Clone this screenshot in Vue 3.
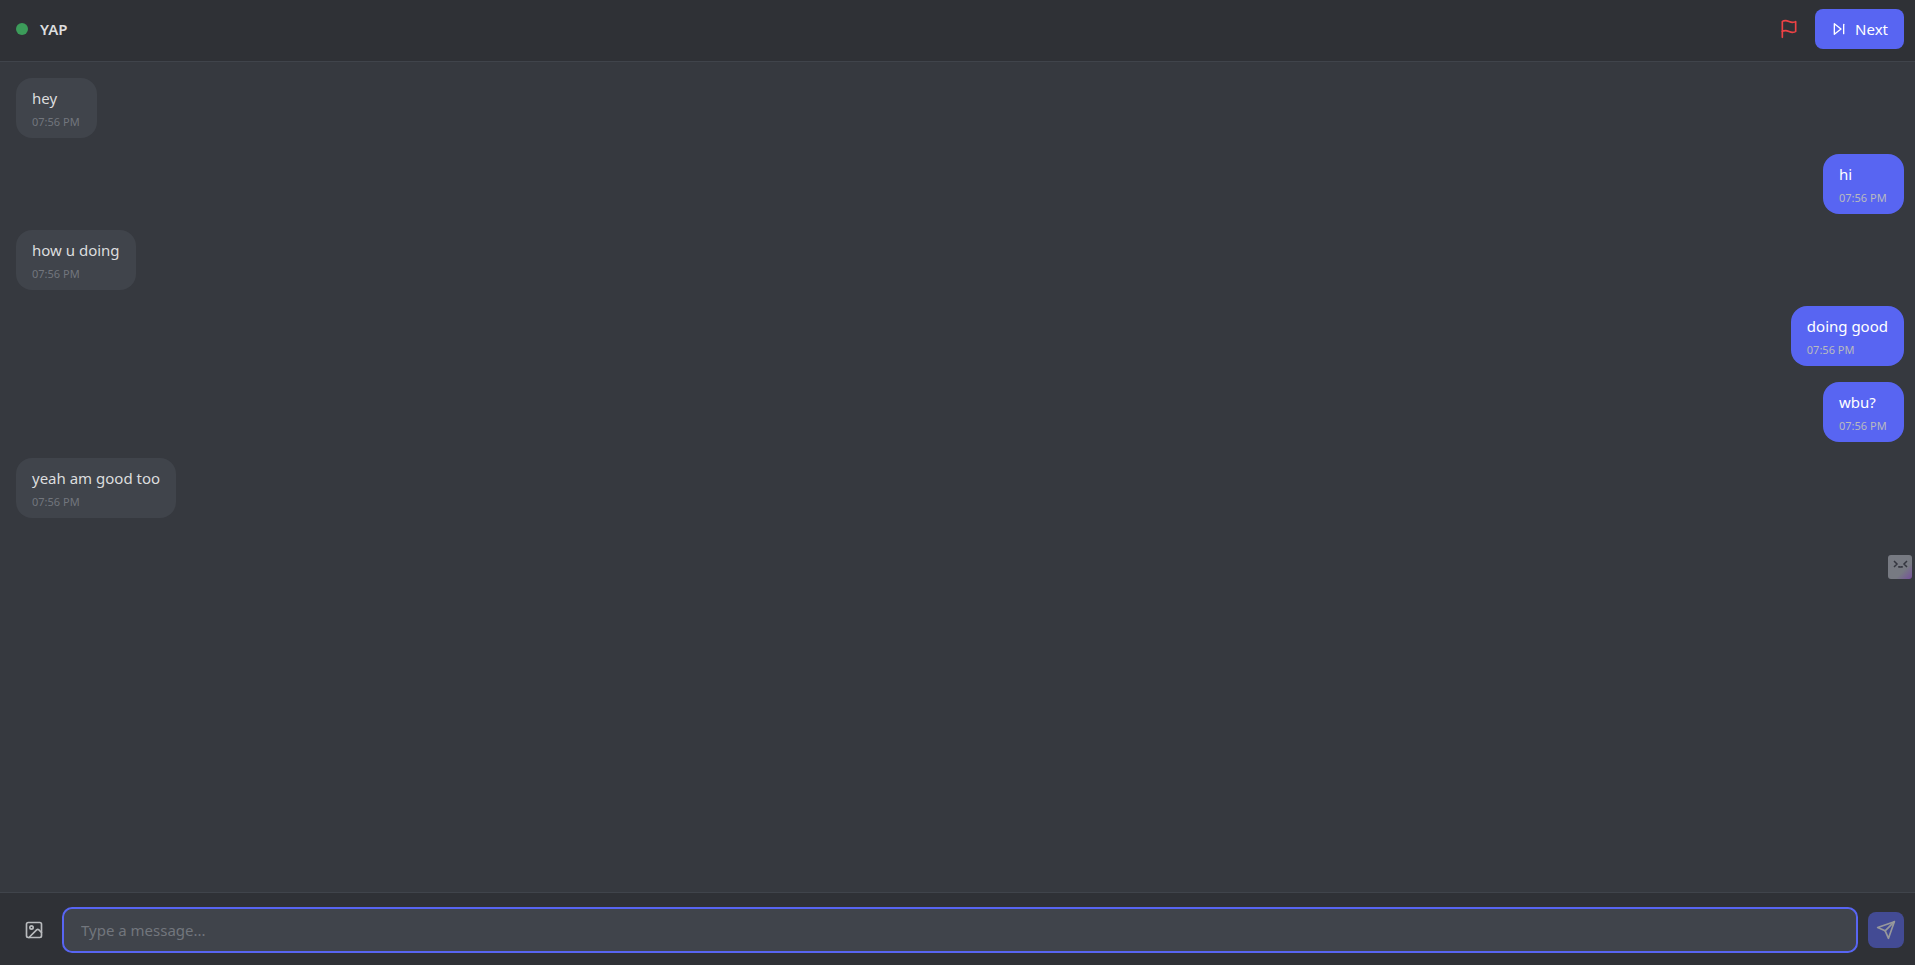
<script setup>
import { ref, onMounted } from 'vue'

const messages = [
  { id: 1, text: 'hey', time: '07:56 PM', own: false },
  { id: 2, text: 'hi', time: '07:56 PM', own: true },
  { id: 3, text: 'how u doing', time: '07:56 PM', own: false },
  { id: 4, text: 'doing good', time: '07:56 PM', own: true },
  { id: 5, text: 'wbu?', time: '07:56 PM', own: true },
  { id: 6, text: 'yeah am good too', time: '07:56 PM', own: false },
]
const draft = ref('')
const field = ref(null)
onMounted(() => field.value.focus())
</script>

<template>
  <div class="chat">
    <header class="topbar">
      <div class="brand">
        <span class="status"></span>
        <h1 class="title">YAP</h1>
      </div>
      <div class="actions">
        <button class="icon-btn report" type="button" aria-label="Report">
          <svg class="icon" viewBox="0 0 24 24"><path d="M4 15s1-1 4-1 5 2 8 2 4-1 4-1V3s-1 1-4 1-5-2-8-2-4 1-4 1z" /><path d="M4 22v-7" /></svg>
        </button>
        <button class="next" type="button">
          <svg class="icon small" viewBox="0 0 24 24"><path d="M5 4l10 8-10 8z" /><path d="M19 5v14" /></svg>
          <span>Next</span>
        </button>
      </div>
    </header>

    <main class="messages">
      <article v-for="m in messages" :key="m.id" class="bubble" :class="{ own: m.own }">
        <p class="text">{{ m.text }}</p>
        <time class="time">{{ m.time }}</time>
      </article>
    </main>

    <form class="composer" @submit.prevent>
      <button class="icon-btn" type="button" aria-label="Add image">
        <svg class="icon" viewBox="0 0 24 24"><rect x="3" y="3" width="18" height="18" rx="2" /><circle cx="9" cy="9" r="2" /><path d="M21 15l-3.1-3.1a2 2 0 0 0-2.8 0L6 21" /></svg>
      </button>
      <input ref="field" v-model="draft" class="field" type="text" placeholder="Type a message..." aria-label="Message" />
      <button class="icon-btn send" type="submit" aria-label="Send" :disabled="!draft">
        <svg class="icon" viewBox="0 0 24 24"><path d="M22 2L15 22l-4-9-9-4z" /><path d="M22 2L11 13" /></svg>
      </button>
    </form>

    <button class="helper" type="button" aria-label="Assistant">
      <svg class="face" viewBox="0 0 24 24"><path d="M6 6l3 3-3 3M19 6l-3 3 3 3M11 11v1h3v-1" /></svg>
    </button>
  </div>
</template>

<style>
body {
  background: #36393f;
}
</style>

<style scoped>
.chat {
  display: flex;
  flex-direction: column;
  min-height: 100vh;
  background: #36393f;
  color: #dcddde;
  font-family: "Segoe UI", "Noto Sans", "Open Sans", sans-serif;
  font-size: 15px;
  line-height: 24px;
}
.topbar {
  display: flex;
  align-items: center;
  justify-content: space-between;
  padding: 9px 11px 12px 16px;
  background: #2f3136;
  border-bottom: 1px solid #40444b;
}
.brand {
  display: flex;
  align-items: center;
  gap: 12px;
}
.status {
  width: 12px;
  height: 12px;
  border-radius: 50%;
  background: #3c9c5a;
}
.title {
  margin: 0;
  font-size: 15px;
  font-weight: 600;
}
.actions {
  display: flex;
  align-items: center;
  gap: 8px;
}
button {
  border: 0;
  font: inherit;
  cursor: pointer;
}
.icon-btn {
  display: flex;
  padding: 8px;
  border-radius: 8px;
  background: transparent;
  color: #b9bbbe;
}
.report {
  color: #ed4245;
}
.icon {
  width: 20px;
  height: 20px;
  fill: none;
  stroke: currentColor;
  stroke-width: 2;
  stroke-linecap: round;
  stroke-linejoin: round;
}
.small {
  width: 16px;
  height: 16px;
}
.next {
  display: flex;
  align-items: center;
  gap: 8px;
  padding: 8px 16px;
  border-radius: 8px;
  background: #5865f2;
  color: #fff;
}
.messages {
  display: flex;
  flex: 1;
  flex-direction: column;
  align-items: flex-start;
  gap: 16px;
  padding: 16px 11px 16px 16px;
}
.bubble {
  box-sizing: border-box;
  min-width: 81px;
  padding: 8px 16px;
  border-radius: 16px;
  background: #40444b;
}
.own {
  align-self: flex-end;
  background: #5865f2;
  color: #fff;
}
.text {
  margin: 0 0 4px;
}
.time {
  display: block;
  font-size: 11px;
  line-height: 16px;
  color: #72767d;
}
.own .time {
  color: #b9bbbe;
}
.composer {
  display: flex;
  align-items: center;
  gap: 12px;
  padding: 16px 11px 14px 16px;
  background: #2f3136;
  border-top: 1px solid #40444b;
}
.field {
  flex: 1;
  min-width: 0;
  padding: 8px 16px;
  border: 1px solid #40444b;
  border-radius: 8px;
  outline: 0;
  background: #40444b;
  color: #dcddde;
  font: inherit;
}
.field:focus {
  box-shadow: 0 0 0 2px #5865f2;
}
.field::placeholder {
  color: #72767d;
  opacity: 1;
}
.send {
  background: #5865f2;
  color: #fff;
}
.send:disabled {
  opacity: 0.5;
}
.helper {
  position: fixed;
  top: 555px;
  right: 3px;
  padding: 0;
  width: 24px;
  height: 24px;
  border-radius: 3px;
  background: linear-gradient(135deg, #777a82 65%, #75509c);
}
.face {
  display: block;
  width: 24px;
  height: 24px;
  fill: none;
  stroke: #34363f;
  stroke-width: 1.5;
}
</style>
